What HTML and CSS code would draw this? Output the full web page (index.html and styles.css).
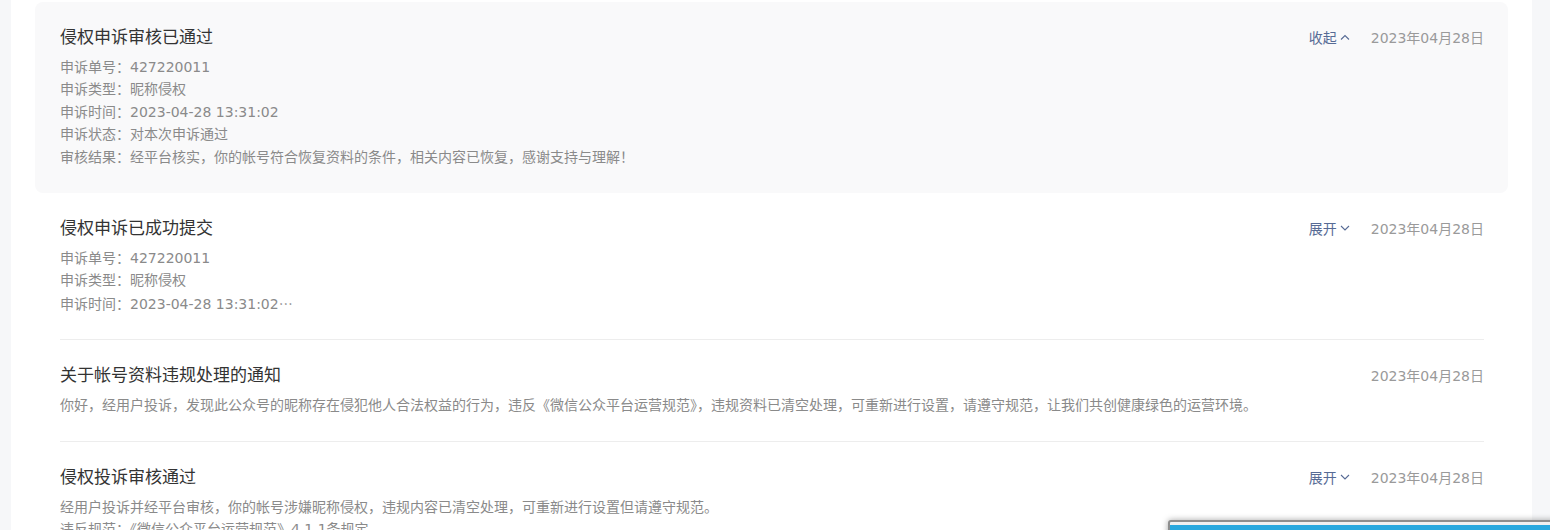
FILE: index.html
```html
<!DOCTYPE html>
<html lang="zh-CN">
<head>
<meta charset="utf-8">
<title>消息通知</title>
<link rel="stylesheet" href="styles.css">
</head>
<body>
<div class="panel">
  <ul class="msg-list">
    <li class="msg msg-active">
      <div class="msg-inner">
        <div class="msg-head">
          <h3 class="msg-title">侵权申诉审核已通过</h3>
          <div class="msg-meta">
            <a class="toggle">收起<svg class="chev" width="10" height="6" viewBox="0 0 10 6"><path d="M1 5.5 L5 1.5 L9 5.5" fill="none" stroke="currentColor" stroke-width="1.1"/></svg></a>
            <span class="msg-date">2023年04月28日</span>
          </div>
        </div>
        <div class="msg-body">
          <p>申诉单号：427220011</p>
          <p>申诉类型：昵称侵权</p>
          <p>申诉时间：2023-04-28 13:31:02</p>
          <p>申诉状态：对本次申诉通过</p>
          <p>审核结果：经平台核实，你的帐号符合恢复资料的条件，相关内容已恢复，感谢支持与理解！</p>
        </div>
      </div>
    </li>
    <li class="msg">
      <div class="msg-inner">
        <div class="msg-head">
          <h3 class="msg-title">侵权申诉已成功提交</h3>
          <div class="msg-meta">
            <a class="toggle">展开<svg class="chev" width="10" height="6" viewBox="0 0 10 6"><path d="M1 1 L5 5 L9 1" fill="none" stroke="currentColor" stroke-width="1.1"/></svg></a>
            <span class="msg-date">2023年04月28日</span>
          </div>
        </div>
        <div class="msg-body">
          <p>申诉单号：427220011</p>
          <p>申诉类型：昵称侵权</p>
          <p>申诉时间：2023-04-28 13:31:02<span class="ellipsis">⋯</span></p>
        </div>
      </div>
    </li>
    <li class="msg">
      <div class="msg-inner">
        <div class="msg-head">
          <h3 class="msg-title">关于帐号资料违规处理的通知</h3>
          <div class="msg-meta">
            <span class="msg-date">2023年04月28日</span>
          </div>
        </div>
        <div class="msg-body">
          <p>你好，经用户投诉，发现此公众号的昵称存在侵犯他人合法权益的行为，违反《微信公众平台运营规范》，违规资料已清空处理，可重新进行设置，请遵守规范，让我们共创健康绿色的运营环境。</p>
        </div>
      </div>
    </li>
    <li class="msg">
      <div class="msg-inner">
        <div class="msg-head">
          <h3 class="msg-title">侵权投诉审核通过</h3>
          <div class="msg-meta">
            <a class="toggle">展开<svg class="chev" width="10" height="6" viewBox="0 0 10 6"><path d="M1 1 L5 5 L9 1" fill="none" stroke="currentColor" stroke-width="1.1"/></svg></a>
            <span class="msg-date">2023年04月28日</span>
          </div>
        </div>
        <div class="msg-body">
          <p>经用户投诉并经平台审核，你的帐号涉嫌昵称侵权，违规内容已清空处理，可重新进行设置但请遵守规范。</p>
          <p>违反规范：《微信公众平台运营规范》4.1.1条规定</p>
        </div>
      </div>
    </li>
  </ul>
</div>
<div class="float-window">
  <div class="float-bar"></div>
</div>
</body>
</html>
```

FILE: styles.css
```css
html, body {
  margin: 0;
  padding: 0;
}
body {
  background: #f6f7f9;
  font-family: "DejaVu Sans", "Noto Sans CJK SC", sans-serif;
  overflow: hidden;
}
.panel {
  margin: 0 18px 0 11px;
  background: #fff;
  padding: 2px 24px 40px;
  min-height: 600px;
}
.msg-list {
  list-style: none;
  margin: 0;
  padding: 0;
}
.msg {
  padding: 0 24px 0 25px;
  border-radius: 8px;
}
.msg-active {
  background: #f9f9fa;
}
.msg-inner {
  padding: 23px 0 24px;
  border-bottom: 1px solid #ededed;
}
.msg-active .msg-inner {
  border-bottom-color: transparent;
}
.msg:last-child .msg-inner {
  border-bottom: 0;
}
.msg-head {
  display: flex;
  align-items: center;
  justify-content: space-between;
  margin-bottom: 7px;
}
.msg-title {
  margin: 0;
  font-size: 17px;
  font-weight: 400;
  line-height: 24px;
  color: #333333;
}
.msg-meta {
  display: flex;
  align-items: center;
  gap: 21px;
  font-size: 14px;
}
.toggle {
  display: flex;
  align-items: center;
  gap: 3px;
  color: #576b95;
  cursor: pointer;
}
.chev {
  display: block;
}
.msg-date {
  color: #9a9a9a;
}
.msg-body p {
  margin: 0;
  font-size: 14px;
  line-height: 22.4px;
  color: #8a8a8a;
}
.ellipsis {
  font-family: "Noto Sans CJK SC", sans-serif;
}
.float-window {
  position: fixed;
  left: 1168px;
  top: 520px;
  width: 420px;
  height: 120px;
  background: #f0f0f0;
  border: 2px solid #8d8d8d;
  border-radius: 3px 0 0 0;
  box-shadow: 0 0 6px rgba(0,0,0,0.35);
}
.float-bar {
  margin-top: 3px;
  height: 30px;
  background: #29a8de;
}
```
